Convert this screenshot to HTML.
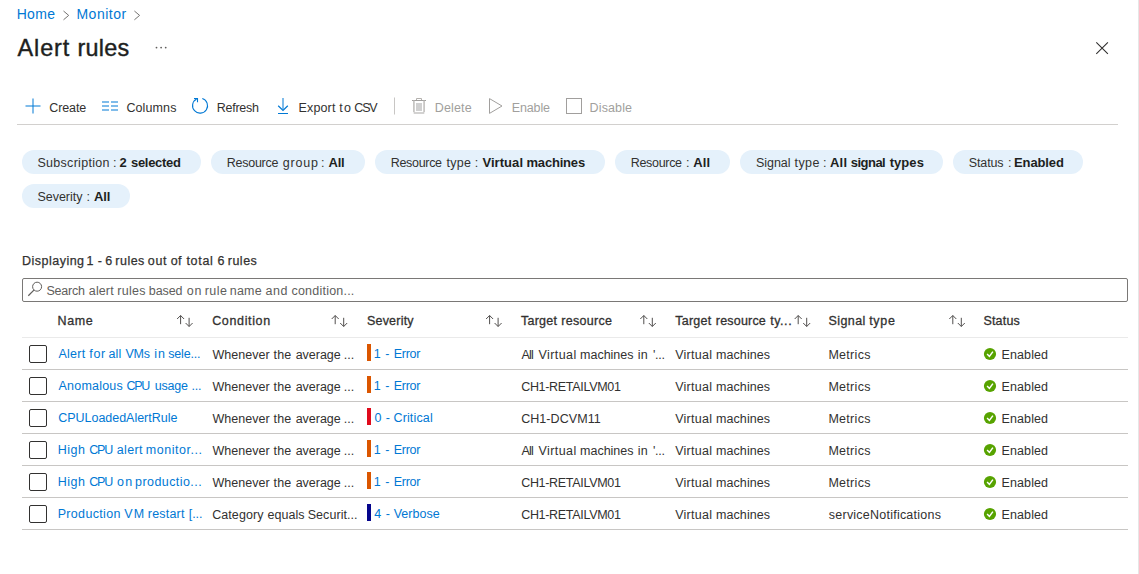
<!DOCTYPE html>
<html><head><meta charset="utf-8"><title>Alert rules</title>
<style>
html,body{margin:0;padding:0;background:#fff;}
body{width:1139px;height:574px;position:relative;overflow:hidden;font-family:"Liberation Sans", sans-serif;}
.t{position:absolute;white-space:pre;line-height:1;font-family:"Liberation Sans", sans-serif;}
.a{position:absolute;}
svg{position:absolute;overflow:visible;}
.pill{position:absolute;height:24px;border-radius:12px;background:#e5f1fb;}
.hl{position:absolute;left:22px;width:1106px;height:1px;}
.cb{position:absolute;left:29px;width:16px;height:16px;border:1px solid #323130;border-radius:2px;background:#fff;}
</style></head><body>
<div class="a" style="left:1138px;top:0;width:1px;height:574px;background:#e6e6e6"></div>
<div class="a" style="left:22px;top:278px;width:1104px;height:22px;border:1px solid #7a7876;border-radius:2px;background:#fff"></div>
<svg width="1139" height="574" viewBox="0 0 1139 574" style="left:0;top:0" fill="none">
<path d="M63.5 11 L68.7 15.4 L63.5 19.8" stroke="#757371" stroke-width="1"/>
<path d="M134.4 11 L139.6 15.4 L134.4 19.8" stroke="#757371" stroke-width="1"/>
<circle cx="156.5" cy="47.6" r="0.9" fill="#605e5c"/>
<circle cx="161.1" cy="47.6" r="0.9" fill="#605e5c"/>
<circle cx="165.7" cy="47.6" r="0.9" fill="#605e5c"/>
<path d="M1096.3 42.3 L1107.9 53.9 M1107.9 42.3 L1096.3 53.9" stroke="#323130" stroke-width="1.1"/>
<rect x="25.5" y="105" width="15" height="2" fill="#80bcea"/><rect x="32" y="98.5" width="2" height="15" fill="#80bcea"/><rect x="32" y="105" width="2" height="2" fill="#409adf"/>
<rect x="102" y="101" width="7" height="2" fill="#80bcea"/><rect x="111" y="101" width="7" height="2" fill="#80bcea"/>
<rect x="102" y="105" width="7" height="2" fill="#80bcea"/><rect x="111" y="105" width="7" height="2" fill="#80bcea"/>
<rect x="102" y="109" width="7" height="2" fill="#80bcea"/><rect x="111" y="109" width="7" height="2" fill="#80bcea"/>
<path d="M202.3 98.5 A7.5 7.5 0 1 1 196.6 99" stroke="#0078d4" stroke-width="1.1"/>
<path d="M194 98.5 H197.5 V102.2" stroke="#0078d4" stroke-width="1.1"/>
<rect x="282" y="98" width="2" height="11.5" fill="#80bcea"/>
<path d="M278.2 105.7 L283 110.4 L287.8 105.7" stroke="#0078d4" stroke-width="1.2"/>
<rect x="278" y="113" width="10" height="1" fill="#0078d4"/>
<rect x="394" y="97.5" width="1" height="17" fill="#c8c6c4"/>
<rect x="412" y="100" width="14" height="1" fill="#a19f9d"/>
<path d="M416.5 100 V98.5 H421.5 V100" stroke="#b3b0ad" stroke-width="1"/>
<path d="M413.9 100.5 V112.3 M424.1 100.5 V112.3" stroke="#c2c0be" stroke-width="1.6"/>
<path d="M414.2 113 H423.8" stroke="#a8a6a4" stroke-width="1.1" stroke-linecap="round"/>
<rect x="416" y="103" width="6" height="8" fill="#d0d0d0"/>
<path d="M489.5 98.6 L502 106 L489.5 113.4 Z" stroke="#a19f9d" stroke-width="1"/>
<rect x="566.5" y="98.5" width="15" height="15" stroke="#a19f9d" stroke-width="1"/>
<circle cx="37.1" cy="286.7" r="4.5" stroke="#605e5c" stroke-width="1"/>
<path d="M33.9 290.1 L28.3 295.7" stroke="#605e5c" stroke-width="1.25"/>
<path d="M180.6 324.2 V315.6 M177.1 319 L180.6 315.5 L184.1 319" stroke="#484644" stroke-width="0.95"/>
<path d="M189.1 317.8 V326.4 M185.6 323 L189.1 326.5 L192.6 323" stroke="#484644" stroke-width="0.95"/>
<path d="M335.2 324.2 V315.6 M331.7 319 L335.2 315.5 L338.7 319" stroke="#484644" stroke-width="0.95"/>
<path d="M343.7 317.8 V326.4 M340.2 323 L343.7 326.5 L347.2 323" stroke="#484644" stroke-width="0.95"/>
<path d="M489.6 324.2 V315.6 M486.1 319 L489.6 315.5 L493.1 319" stroke="#484644" stroke-width="0.95"/>
<path d="M498.1 317.8 V326.4 M494.6 323 L498.1 326.5 L501.6 323" stroke="#484644" stroke-width="0.95"/>
<path d="M643.8 324.2 V315.6 M640.3 319 L643.8 315.5 L647.3 319" stroke="#484644" stroke-width="0.95"/>
<path d="M652.3 317.8 V326.4 M648.8 323 L652.3 326.5 L655.8 323" stroke="#484644" stroke-width="0.95"/>
<path d="M798.2 324.2 V315.6 M794.7 319 L798.2 315.5 L801.7 319" stroke="#484644" stroke-width="0.95"/>
<path d="M806.7 317.8 V326.4 M803.2 323 L806.7 326.5 L810.2 323" stroke="#484644" stroke-width="0.95"/>
<path d="M952.8 324.2 V315.6 M949.3 319 L952.8 315.5 L956.3 319" stroke="#484644" stroke-width="0.95"/>
<path d="M961.3 317.8 V326.4 M957.8 323 L961.3 326.5 L964.8 323" stroke="#484644" stroke-width="0.95"/>
<circle cx="990" cy="354" r="6.1" fill="#57a300"/>
<path d="M987.1 354 L989.4 356.4 L992.9 351.6" stroke="#fff" stroke-width="1.5"/>
<circle cx="990" cy="386" r="6.1" fill="#57a300"/>
<path d="M987.1 386 L989.4 388.4 L992.9 383.6" stroke="#fff" stroke-width="1.5"/>
<circle cx="990" cy="418" r="6.1" fill="#57a300"/>
<path d="M987.1 418 L989.4 420.4 L992.9 415.6" stroke="#fff" stroke-width="1.5"/>
<circle cx="990" cy="450" r="6.1" fill="#57a300"/>
<path d="M987.1 450 L989.4 452.4 L992.9 447.6" stroke="#fff" stroke-width="1.5"/>
<circle cx="990" cy="482" r="6.1" fill="#57a300"/>
<path d="M987.1 482 L989.4 484.4 L992.9 479.6" stroke="#fff" stroke-width="1.5"/>
<circle cx="990" cy="514" r="6.1" fill="#57a300"/>
<path d="M987.1 514 L989.4 516.4 L992.9 511.6" stroke="#fff" stroke-width="1.5"/>
</svg>
<div class="a" style="left:17px;top:124px;width:1101px;height:1px;background:#d2d0ce"></div>
<div class="pill" style="left:22px;top:150px;width:179px"></div>
<div class="pill" style="left:211px;top:150px;width:154px"></div>
<div class="pill" style="left:375px;top:150px;width:230px"></div>
<div class="pill" style="left:615px;top:150px;width:115px"></div>
<div class="pill" style="left:740px;top:150px;width:203px"></div>
<div class="pill" style="left:953px;top:150px;width:130px"></div>
<div class="pill" style="left:22px;top:184px;width:108px"></div>
<div class="hl" style="top:337px;background:#eaeaea"></div>
<div class="hl" style="top:369px;background:#c8c6c4"></div>
<div class="hl" style="top:401px;background:#c8c6c4"></div>
<div class="hl" style="top:433px;background:#c8c6c4"></div>
<div class="hl" style="top:465px;background:#c8c6c4"></div>
<div class="hl" style="top:497px;background:#c8c6c4"></div>
<div class="hl" style="top:529px;background:#c8c6c4"></div>
<div class="cb" style="top:345px"></div>
<div class="cb" style="top:377px"></div>
<div class="cb" style="top:409px"></div>
<div class="cb" style="top:441px"></div>
<div class="cb" style="top:473px"></div>
<div class="cb" style="top:505px"></div>
<div class="a" style="left:367px;top:344px;width:4px;height:17px;background:#db5600"></div>
<div class="a" style="left:367px;top:376px;width:4px;height:17px;background:#db5600"></div>
<div class="a" style="left:367px;top:408px;width:4px;height:17px;background:#e00b1c"></div>
<div class="a" style="left:367px;top:440px;width:4px;height:17px;background:#db5600"></div>
<div class="a" style="left:367px;top:472px;width:4px;height:17px;background:#db5600"></div>
<div class="a" style="left:367px;top:504px;width:4px;height:17px;background:#05058c"></div>
<span class="t" style="left:16.66px;top:7.35px;font-size:14px;font-weight:400;color:#0078d4;letter-spacing:0.33px;">Home</span>
<span class="t" style="left:76.46px;top:7.35px;font-size:14px;font-weight:400;color:#0078d4;letter-spacing:0.49px;">Monitor</span>
<span class="t" style="left:17.48px;top:37.29px;font-size:23.4px;font-weight:400;color:#201f1e;letter-spacing:0.94px;-webkit-text-stroke:0.4px #201f1e;">Alert</span>
<span class="t" style="left:77.52px;top:37.29px;font-size:23.4px;font-weight:400;color:#201f1e;letter-spacing:0.22px;-webkit-text-stroke:0.4px #201f1e;">rules</span>
<span class="t" style="left:49.21px;top:102.02px;font-size:12.5px;font-weight:400;color:#323130;letter-spacing:-0.08px;">Create</span>
<span class="t" style="left:126.38px;top:102.02px;font-size:12.5px;font-weight:400;color:#323130;letter-spacing:0.12px;">Columns</span>
<span class="t" style="left:216.64px;top:102.02px;font-size:12.5px;font-weight:400;color:#323130;letter-spacing:-0.22px;">Refresh</span>
<span class="t" style="left:298.50px;top:102.02px;font-size:12.5px;font-weight:400;color:#323130;letter-spacing:0.15px;">Export</span>
<span class="t" style="left:339.15px;top:102.02px;font-size:12.5px;font-weight:400;color:#323130;letter-spacing:1.28px;">to</span>
<span class="t" style="left:354.34px;top:102.02px;font-size:12.5px;font-weight:400;color:#323130;letter-spacing:-1.18px;">CSV</span>
<span class="t" style="left:434.68px;top:102.02px;font-size:12.5px;font-weight:400;color:#a19f9d;letter-spacing:0.18px;">Delete</span>
<span class="t" style="left:511.68px;top:102.02px;font-size:12.5px;font-weight:400;color:#a19f9d;letter-spacing:-0.11px;">Enable</span>
<span class="t" style="left:589.59px;top:102.02px;font-size:12.5px;font-weight:400;color:#a19f9d;letter-spacing:0.13px;">Disable</span>
<span class="t" style="left:37.46px;top:157.32px;font-size:12.5px;font-weight:400;color:#323130;letter-spacing:0.29px;">Subscription</span>
<span class="t" style="left:112.90px;top:157.32px;font-size:12.5px;font-weight:400;color:#323130;">:</span>
<span class="t" style="left:119.50px;top:156.20px;font-size:13px;font-weight:700;color:#201f1e;">2</span>
<span class="t" style="left:130.95px;top:156.20px;font-size:13px;font-weight:700;color:#201f1e;letter-spacing:-0.28px;">selected</span>
<span class="t" style="left:226.68px;top:157.32px;font-size:12.5px;font-weight:400;color:#323130;letter-spacing:-0.24px;">Resource</span>
<span class="t" style="left:282.71px;top:157.32px;font-size:12.5px;font-weight:400;color:#323130;letter-spacing:0.82px;">group</span>
<span class="t" style="left:321.12px;top:157.32px;font-size:12.5px;font-weight:400;color:#323130;">:</span>
<span class="t" style="left:328.55px;top:156.20px;font-size:13px;font-weight:700;color:#201f1e;letter-spacing:-0.28px;">All</span>
<span class="t" style="left:390.68px;top:157.32px;font-size:12.5px;font-weight:400;color:#323130;letter-spacing:-0.30px;">Resource</span>
<span class="t" style="left:446.41px;top:157.32px;font-size:12.5px;font-weight:400;color:#323130;letter-spacing:0.30px;">type</span>
<span class="t" style="left:474.86px;top:157.32px;font-size:12.5px;font-weight:400;color:#323130;">:</span>
<span class="t" style="left:482.39px;top:156.20px;font-size:13px;font-weight:700;color:#201f1e;letter-spacing:0.07px;">Virtual</span>
<span class="t" style="left:526.48px;top:156.20px;font-size:13px;font-weight:700;color:#201f1e;letter-spacing:-0.19px;">machines</span>
<span class="t" style="left:630.68px;top:157.32px;font-size:12.5px;font-weight:400;color:#323130;letter-spacing:-0.30px;">Resource</span>
<span class="t" style="left:686.09px;top:157.32px;font-size:12.5px;font-weight:400;color:#323130;">:</span>
<span class="t" style="left:693.15px;top:156.20px;font-size:13px;font-weight:700;color:#201f1e;letter-spacing:0.21px;">All</span>
<span class="t" style="left:755.92px;top:157.32px;font-size:12.5px;font-weight:400;color:#323130;letter-spacing:-0.03px;">Signal</span>
<span class="t" style="left:794.62px;top:157.32px;font-size:12.5px;font-weight:400;color:#323130;letter-spacing:0.37px;">type</span>
<span class="t" style="left:822.92px;top:157.32px;font-size:12.5px;font-weight:400;color:#323130;">:</span>
<span class="t" style="left:830.04px;top:156.20px;font-size:13px;font-weight:700;color:#201f1e;letter-spacing:0.18px;">All</span>
<span class="t" style="left:850.79px;top:156.20px;font-size:13px;font-weight:700;color:#201f1e;letter-spacing:-0.53px;">signal</span>
<span class="t" style="left:889.71px;top:156.20px;font-size:13px;font-weight:700;color:#201f1e;letter-spacing:0.05px;">types</span>
<span class="t" style="left:968.78px;top:157.32px;font-size:12.5px;font-weight:400;color:#323130;letter-spacing:-0.12px;">Status</span>
<span class="t" style="left:1007.91px;top:157.32px;font-size:12.5px;font-weight:400;color:#323130;">:</span>
<span class="t" style="left:1014.10px;top:156.20px;font-size:13px;font-weight:700;color:#201f1e;letter-spacing:-0.14px;">Enabled</span>
<span class="t" style="left:37.46px;top:191.12px;font-size:12.5px;font-weight:400;color:#323130;letter-spacing:-0.02px;">Severity</span>
<span class="t" style="left:86.56px;top:191.12px;font-size:12.5px;font-weight:400;color:#323130;">:</span>
<span class="t" style="left:93.93px;top:190.00px;font-size:13px;font-weight:700;color:#201f1e;letter-spacing:-0.08px;">All</span>
<span class="t" style="left:22.08px;top:255.02px;font-size:12.5px;font-weight:400;color:#323130;letter-spacing:0.48px;-webkit-text-stroke:0.25px #323130;">Displaying</span>
<span class="t" style="left:86.38px;top:255.02px;font-size:12.5px;font-weight:400;color:#323130;-webkit-text-stroke:0.25px #323130;">1</span>
<span class="t" style="left:97.75px;top:255.02px;font-size:12.5px;font-weight:400;color:#323130;-webkit-text-stroke:0.25px #323130;">-</span>
<span class="t" style="left:105.23px;top:255.02px;font-size:12.5px;font-weight:400;color:#323130;-webkit-text-stroke:0.25px #323130;">6</span>
<span class="t" style="left:115.37px;top:255.02px;font-size:12.5px;font-weight:400;color:#323130;letter-spacing:0.47px;-webkit-text-stroke:0.25px #323130;">rules</span>
<span class="t" style="left:147.87px;top:255.02px;font-size:12.5px;font-weight:400;color:#323130;letter-spacing:0.67px;-webkit-text-stroke:0.25px #323130;">out</span>
<span class="t" style="left:170.87px;top:255.02px;font-size:12.5px;font-weight:400;color:#323130;letter-spacing:0.11px;-webkit-text-stroke:0.25px #323130;">of</span>
<span class="t" style="left:186.41px;top:255.02px;font-size:12.5px;font-weight:400;color:#323130;letter-spacing:0.70px;-webkit-text-stroke:0.25px #323130;">total</span>
<span class="t" style="left:217.38px;top:255.02px;font-size:12.5px;font-weight:400;color:#323130;-webkit-text-stroke:0.25px #323130;">6</span>
<span class="t" style="left:227.77px;top:255.02px;font-size:12.5px;font-weight:400;color:#323130;letter-spacing:0.49px;-webkit-text-stroke:0.25px #323130;">rules</span>
<span class="t" style="left:46.46px;top:285.12px;font-size:12.5px;font-weight:400;color:#605e5c;letter-spacing:-0.20px;">Search</span>
<span class="t" style="left:88.83px;top:285.12px;font-size:12.5px;font-weight:400;color:#605e5c;letter-spacing:0.12px;">alert</span>
<span class="t" style="left:117.37px;top:285.12px;font-size:12.5px;font-weight:400;color:#605e5c;letter-spacing:0.24px;">rules</span>
<span class="t" style="left:148.80px;top:285.12px;font-size:12.5px;font-weight:400;color:#605e5c;letter-spacing:-0.08px;">based</span>
<span class="t" style="left:186.71px;top:285.12px;font-size:12.5px;font-weight:400;color:#605e5c;letter-spacing:0.82px;">on</span>
<span class="t" style="left:204.73px;top:285.12px;font-size:12.5px;font-weight:400;color:#605e5c;letter-spacing:0.46px;">rule</span>
<span class="t" style="left:229.82px;top:285.12px;font-size:12.5px;font-weight:400;color:#605e5c;letter-spacing:0.19px;">name</span>
<span class="t" style="left:265.46px;top:285.12px;font-size:12.5px;font-weight:400;color:#605e5c;letter-spacing:0.55px;">and</span>
<span class="t" style="left:291.46px;top:285.12px;font-size:12.5px;font-weight:400;color:#605e5c;letter-spacing:0.22px;">condition...</span>
<span class="t" style="left:57.50px;top:315.32px;font-size:12.5px;font-weight:400;color:#323130;letter-spacing:0.66px;-webkit-text-stroke:0.3px #323130;">Name</span>
<span class="t" style="left:212.21px;top:315.32px;font-size:12.5px;font-weight:400;color:#323130;letter-spacing:0.64px;-webkit-text-stroke:0.3px #323130;">Condition</span>
<span class="t" style="left:366.92px;top:315.32px;font-size:12.5px;font-weight:400;color:#323130;letter-spacing:0.22px;-webkit-text-stroke:0.3px #323130;">Severity</span>
<span class="t" style="left:521.12px;top:315.32px;font-size:12.5px;font-weight:400;color:#323130;letter-spacing:0.20px;-webkit-text-stroke:0.3px #323130;">Target</span>
<span class="t" style="left:561.37px;top:315.32px;font-size:12.5px;font-weight:400;color:#323130;letter-spacing:0.29px;-webkit-text-stroke:0.3px #323130;">resource</span>
<span class="t" style="left:675.33px;top:315.32px;font-size:12.5px;font-weight:400;color:#323130;letter-spacing:0.21px;-webkit-text-stroke:0.3px #323130;">Target</span>
<span class="t" style="left:715.87px;top:315.32px;font-size:12.5px;font-weight:400;color:#323130;letter-spacing:0.19px;-webkit-text-stroke:0.3px #323130;">resource</span>
<span class="t" style="left:770.28px;top:315.32px;font-size:12.5px;font-weight:400;color:#323130;letter-spacing:0.53px;-webkit-text-stroke:0.3px #323130;">ty...</span>
<span class="t" style="left:828.56px;top:315.32px;font-size:12.5px;font-weight:400;color:#323130;letter-spacing:0.42px;-webkit-text-stroke:0.3px #323130;">Signal</span>
<span class="t" style="left:869.15px;top:315.32px;font-size:12.5px;font-weight:400;color:#323130;letter-spacing:0.69px;-webkit-text-stroke:0.3px #323130;">type</span>
<span class="t" style="left:983.46px;top:315.32px;font-size:12.5px;font-weight:400;color:#323130;letter-spacing:0.18px;-webkit-text-stroke:0.3px #323130;">Status</span>
<span class="t" style="left:58.49px;top:348.32px;font-size:12.5px;font-weight:400;color:#0078d4;letter-spacing:0.24px;">Alert</span>
<span class="t" style="left:89.35px;top:348.32px;font-size:12.5px;font-weight:400;color:#0078d4;letter-spacing:0.59px;">for</span>
<span class="t" style="left:108.39px;top:348.32px;font-size:12.5px;font-weight:400;color:#0078d4;letter-spacing:0.14px;">all</span>
<span class="t" style="left:125.38px;top:348.32px;font-size:12.5px;font-weight:400;color:#0078d4;letter-spacing:-0.17px;">VMs</span>
<span class="t" style="left:154.37px;top:348.32px;font-size:12.5px;font-weight:400;color:#0078d4;letter-spacing:0.86px;">in</span>
<span class="t" style="left:168.25px;top:348.32px;font-size:12.5px;font-weight:400;color:#0078d4;letter-spacing:-0.17px;">sele...</span>
<span class="t" style="left:212.50px;top:349.32px;font-size:12.5px;font-weight:400;color:#323130;letter-spacing:0.02px;">Whenever</span>
<span class="t" style="left:273.62px;top:349.32px;font-size:12.5px;font-weight:400;color:#323130;letter-spacing:0.14px;">the</span>
<span class="t" style="left:295.63px;top:349.32px;font-size:12.5px;font-weight:400;color:#323130;letter-spacing:-0.01px;">average</span>
<span class="t" style="left:343.84px;top:349.32px;font-size:12.5px;font-weight:400;color:#323130;letter-spacing:0.02px;">...</span>
<span class="t" style="left:373.67px;top:348.32px;font-size:12.5px;font-weight:400;color:#0078d4;">1</span>
<span class="t" style="left:385.35px;top:348.32px;font-size:12.5px;font-weight:400;color:#0078d4;">-</span>
<span class="t" style="left:393.68px;top:348.32px;font-size:12.5px;font-weight:400;color:#0078d4;letter-spacing:-0.25px;">Error</span>
<span class="t" style="left:521.47px;top:349.32px;font-size:12.5px;font-weight:400;color:#323130;letter-spacing:-0.79px;">All</span>
<span class="t" style="left:538.49px;top:349.32px;font-size:12.5px;font-weight:400;color:#323130;letter-spacing:0.43px;">Virtual</span>
<span class="t" style="left:580.11px;top:349.32px;font-size:12.5px;font-weight:400;color:#323130;letter-spacing:-0.02px;">machines</span>
<span class="t" style="left:637.85px;top:349.32px;font-size:12.5px;font-weight:400;color:#323130;letter-spacing:0.09px;">in</span>
<span class="t" style="left:652.88px;top:349.32px;font-size:12.5px;font-weight:400;color:#323130;letter-spacing:-0.21px;">'...</span>
<span class="t" style="left:675.13px;top:349.32px;font-size:12.5px;font-weight:400;color:#323130;letter-spacing:0.28px;">Virtual</span>
<span class="t" style="left:716.11px;top:349.32px;font-size:12.5px;font-weight:400;color:#323130;letter-spacing:0.05px;">machines</span>
<span class="t" style="left:828.42px;top:349.32px;font-size:12.5px;font-weight:400;color:#323130;letter-spacing:0.29px;">Metrics</span>
<span class="t" style="left:1001.50px;top:349.32px;font-size:12.5px;font-weight:400;color:#323130;letter-spacing:0.11px;">Enabled</span>
<span class="t" style="left:58.49px;top:380.32px;font-size:12.5px;font-weight:400;color:#0078d4;letter-spacing:0.22px;">Anomalous</span>
<span class="t" style="left:126.38px;top:380.32px;font-size:12.5px;font-weight:400;color:#0078d4;letter-spacing:-1.22px;">CPU</span>
<span class="t" style="left:154.73px;top:380.32px;font-size:12.5px;font-weight:400;color:#0078d4;letter-spacing:-0.20px;">usage</span>
<span class="t" style="left:191.38px;top:380.32px;font-size:12.5px;font-weight:400;color:#0078d4;letter-spacing:-0.22px;">...</span>
<span class="t" style="left:212.50px;top:381.32px;font-size:12.5px;font-weight:400;color:#323130;letter-spacing:0.02px;">Whenever</span>
<span class="t" style="left:273.62px;top:381.32px;font-size:12.5px;font-weight:400;color:#323130;letter-spacing:0.14px;">the</span>
<span class="t" style="left:295.63px;top:381.32px;font-size:12.5px;font-weight:400;color:#323130;letter-spacing:-0.01px;">average</span>
<span class="t" style="left:343.84px;top:381.32px;font-size:12.5px;font-weight:400;color:#323130;letter-spacing:0.02px;">...</span>
<span class="t" style="left:373.67px;top:380.32px;font-size:12.5px;font-weight:400;color:#0078d4;">1</span>
<span class="t" style="left:385.35px;top:380.32px;font-size:12.5px;font-weight:400;color:#0078d4;">-</span>
<span class="t" style="left:393.68px;top:380.32px;font-size:12.5px;font-weight:400;color:#0078d4;letter-spacing:-0.25px;">Error</span>
<span class="t" style="left:521.20px;top:381.32px;font-size:12.5px;font-weight:400;color:#323130;letter-spacing:-0.31px;">CH1-RETAILVM01</span>
<span class="t" style="left:675.13px;top:381.32px;font-size:12.5px;font-weight:400;color:#323130;letter-spacing:0.28px;">Virtual</span>
<span class="t" style="left:716.11px;top:381.32px;font-size:12.5px;font-weight:400;color:#323130;letter-spacing:0.05px;">machines</span>
<span class="t" style="left:828.42px;top:381.32px;font-size:12.5px;font-weight:400;color:#323130;letter-spacing:0.29px;">Metrics</span>
<span class="t" style="left:1001.50px;top:381.32px;font-size:12.5px;font-weight:400;color:#323130;letter-spacing:0.11px;">Enabled</span>
<span class="t" style="left:58.20px;top:412.32px;font-size:12.5px;font-weight:400;color:#0078d4;letter-spacing:-0.02px;">CPULoadedAlertRule</span>
<span class="t" style="left:212.50px;top:413.32px;font-size:12.5px;font-weight:400;color:#323130;letter-spacing:0.02px;">Whenever</span>
<span class="t" style="left:273.62px;top:413.32px;font-size:12.5px;font-weight:400;color:#323130;letter-spacing:0.14px;">the</span>
<span class="t" style="left:295.63px;top:413.32px;font-size:12.5px;font-weight:400;color:#323130;letter-spacing:-0.01px;">average</span>
<span class="t" style="left:343.84px;top:413.32px;font-size:12.5px;font-weight:400;color:#323130;letter-spacing:0.02px;">...</span>
<span class="t" style="left:374.41px;top:412.32px;font-size:12.5px;font-weight:400;color:#0078d4;">0</span>
<span class="t" style="left:385.67px;top:412.32px;font-size:12.5px;font-weight:400;color:#0078d4;">-</span>
<span class="t" style="left:393.46px;top:412.32px;font-size:12.5px;font-weight:400;color:#0078d4;letter-spacing:0.15px;">Critical</span>
<span class="t" style="left:521.20px;top:413.32px;font-size:12.5px;font-weight:400;color:#323130;letter-spacing:0.06px;">CH1-DCVM11</span>
<span class="t" style="left:675.13px;top:413.32px;font-size:12.5px;font-weight:400;color:#323130;letter-spacing:0.28px;">Virtual</span>
<span class="t" style="left:716.11px;top:413.32px;font-size:12.5px;font-weight:400;color:#323130;letter-spacing:0.05px;">machines</span>
<span class="t" style="left:828.42px;top:413.32px;font-size:12.5px;font-weight:400;color:#323130;letter-spacing:0.29px;">Metrics</span>
<span class="t" style="left:1001.50px;top:413.32px;font-size:12.5px;font-weight:400;color:#323130;letter-spacing:0.11px;">Enabled</span>
<span class="t" style="left:57.68px;top:444.32px;font-size:12.5px;font-weight:400;color:#0078d4;letter-spacing:0.55px;">High</span>
<span class="t" style="left:89.21px;top:444.32px;font-size:12.5px;font-weight:400;color:#0078d4;letter-spacing:-1.22px;">CPU</span>
<span class="t" style="left:116.83px;top:444.32px;font-size:12.5px;font-weight:400;color:#0078d4;letter-spacing:0.32px;">alert</span>
<span class="t" style="left:145.87px;top:444.32px;font-size:12.5px;font-weight:400;color:#0078d4;letter-spacing:0.52px;">monitor...</span>
<span class="t" style="left:212.50px;top:445.32px;font-size:12.5px;font-weight:400;color:#323130;letter-spacing:0.02px;">Whenever</span>
<span class="t" style="left:273.62px;top:445.32px;font-size:12.5px;font-weight:400;color:#323130;letter-spacing:0.14px;">the</span>
<span class="t" style="left:295.63px;top:445.32px;font-size:12.5px;font-weight:400;color:#323130;letter-spacing:-0.01px;">average</span>
<span class="t" style="left:343.84px;top:445.32px;font-size:12.5px;font-weight:400;color:#323130;letter-spacing:0.02px;">...</span>
<span class="t" style="left:373.67px;top:444.32px;font-size:12.5px;font-weight:400;color:#0078d4;">1</span>
<span class="t" style="left:385.35px;top:444.32px;font-size:12.5px;font-weight:400;color:#0078d4;">-</span>
<span class="t" style="left:393.68px;top:444.32px;font-size:12.5px;font-weight:400;color:#0078d4;letter-spacing:-0.25px;">Error</span>
<span class="t" style="left:521.47px;top:445.32px;font-size:12.5px;font-weight:400;color:#323130;letter-spacing:-0.79px;">All</span>
<span class="t" style="left:538.49px;top:445.32px;font-size:12.5px;font-weight:400;color:#323130;letter-spacing:0.43px;">Virtual</span>
<span class="t" style="left:580.11px;top:445.32px;font-size:12.5px;font-weight:400;color:#323130;letter-spacing:-0.02px;">machines</span>
<span class="t" style="left:637.85px;top:445.32px;font-size:12.5px;font-weight:400;color:#323130;letter-spacing:0.09px;">in</span>
<span class="t" style="left:652.88px;top:445.32px;font-size:12.5px;font-weight:400;color:#323130;letter-spacing:-0.21px;">'...</span>
<span class="t" style="left:675.13px;top:445.32px;font-size:12.5px;font-weight:400;color:#323130;letter-spacing:0.28px;">Virtual</span>
<span class="t" style="left:716.11px;top:445.32px;font-size:12.5px;font-weight:400;color:#323130;letter-spacing:0.05px;">machines</span>
<span class="t" style="left:828.42px;top:445.32px;font-size:12.5px;font-weight:400;color:#323130;letter-spacing:0.29px;">Metrics</span>
<span class="t" style="left:1001.50px;top:445.32px;font-size:12.5px;font-weight:400;color:#323130;letter-spacing:0.11px;">Enabled</span>
<span class="t" style="left:57.68px;top:476.32px;font-size:12.5px;font-weight:400;color:#0078d4;letter-spacing:0.55px;">High</span>
<span class="t" style="left:89.21px;top:476.32px;font-size:12.5px;font-weight:400;color:#0078d4;letter-spacing:-1.22px;">CPU</span>
<span class="t" style="left:116.89px;top:476.32px;font-size:12.5px;font-weight:400;color:#0078d4;letter-spacing:1.34px;">on</span>
<span class="t" style="left:135.07px;top:476.32px;font-size:12.5px;font-weight:400;color:#0078d4;letter-spacing:0.43px;">productio...</span>
<span class="t" style="left:212.50px;top:477.32px;font-size:12.5px;font-weight:400;color:#323130;letter-spacing:0.02px;">Whenever</span>
<span class="t" style="left:273.62px;top:477.32px;font-size:12.5px;font-weight:400;color:#323130;letter-spacing:0.14px;">the</span>
<span class="t" style="left:295.63px;top:477.32px;font-size:12.5px;font-weight:400;color:#323130;letter-spacing:-0.01px;">average</span>
<span class="t" style="left:343.84px;top:477.32px;font-size:12.5px;font-weight:400;color:#323130;letter-spacing:0.02px;">...</span>
<span class="t" style="left:373.67px;top:476.32px;font-size:12.5px;font-weight:400;color:#0078d4;">1</span>
<span class="t" style="left:385.35px;top:476.32px;font-size:12.5px;font-weight:400;color:#0078d4;">-</span>
<span class="t" style="left:393.68px;top:476.32px;font-size:12.5px;font-weight:400;color:#0078d4;letter-spacing:-0.25px;">Error</span>
<span class="t" style="left:521.20px;top:477.32px;font-size:12.5px;font-weight:400;color:#323130;letter-spacing:-0.31px;">CH1-RETAILVM01</span>
<span class="t" style="left:675.13px;top:477.32px;font-size:12.5px;font-weight:400;color:#323130;letter-spacing:0.28px;">Virtual</span>
<span class="t" style="left:716.11px;top:477.32px;font-size:12.5px;font-weight:400;color:#323130;letter-spacing:0.05px;">machines</span>
<span class="t" style="left:828.42px;top:477.32px;font-size:12.5px;font-weight:400;color:#323130;letter-spacing:0.29px;">Metrics</span>
<span class="t" style="left:1001.50px;top:477.32px;font-size:12.5px;font-weight:400;color:#323130;letter-spacing:0.11px;">Enabled</span>
<span class="t" style="left:57.68px;top:508.32px;font-size:12.5px;font-weight:400;color:#0078d4;letter-spacing:0.33px;">Production</span>
<span class="t" style="left:124.13px;top:508.32px;font-size:12.5px;font-weight:400;color:#0078d4;letter-spacing:1.39px;">VM</span>
<span class="t" style="left:147.82px;top:508.32px;font-size:12.5px;font-weight:400;color:#0078d4;letter-spacing:0.19px;">restart</span>
<span class="t" style="left:188.85px;top:508.32px;font-size:12.5px;font-weight:400;color:#0078d4;letter-spacing:-0.10px;">[...</span>
<span class="t" style="left:212.21px;top:509.32px;font-size:12.5px;font-weight:400;color:#323130;letter-spacing:0.07px;">Category</span>
<span class="t" style="left:267.48px;top:509.32px;font-size:12.5px;font-weight:400;color:#323130;letter-spacing:0.06px;">equals</span>
<span class="t" style="left:307.74px;top:509.32px;font-size:12.5px;font-weight:400;color:#323130;letter-spacing:0.05px;">Securit...</span>
<span class="t" style="left:374.24px;top:508.32px;font-size:12.5px;font-weight:400;color:#0078d4;">4</span>
<span class="t" style="left:385.67px;top:508.32px;font-size:12.5px;font-weight:400;color:#0078d4;">-</span>
<span class="t" style="left:393.67px;top:508.32px;font-size:12.5px;font-weight:400;color:#0078d4;letter-spacing:0.04px;">Verbose</span>
<span class="t" style="left:521.20px;top:509.32px;font-size:12.5px;font-weight:400;color:#323130;letter-spacing:-0.31px;">CH1-RETAILVM01</span>
<span class="t" style="left:675.13px;top:509.32px;font-size:12.5px;font-weight:400;color:#323130;letter-spacing:0.28px;">Virtual</span>
<span class="t" style="left:716.11px;top:509.32px;font-size:12.5px;font-weight:400;color:#323130;letter-spacing:0.05px;">machines</span>
<span class="t" style="left:828.84px;top:509.32px;font-size:12.5px;font-weight:400;color:#323130;letter-spacing:0.23px;">serviceNotifications</span>
<span class="t" style="left:1001.50px;top:509.32px;font-size:12.5px;font-weight:400;color:#323130;letter-spacing:0.11px;">Enabled</span>
</body></html>
